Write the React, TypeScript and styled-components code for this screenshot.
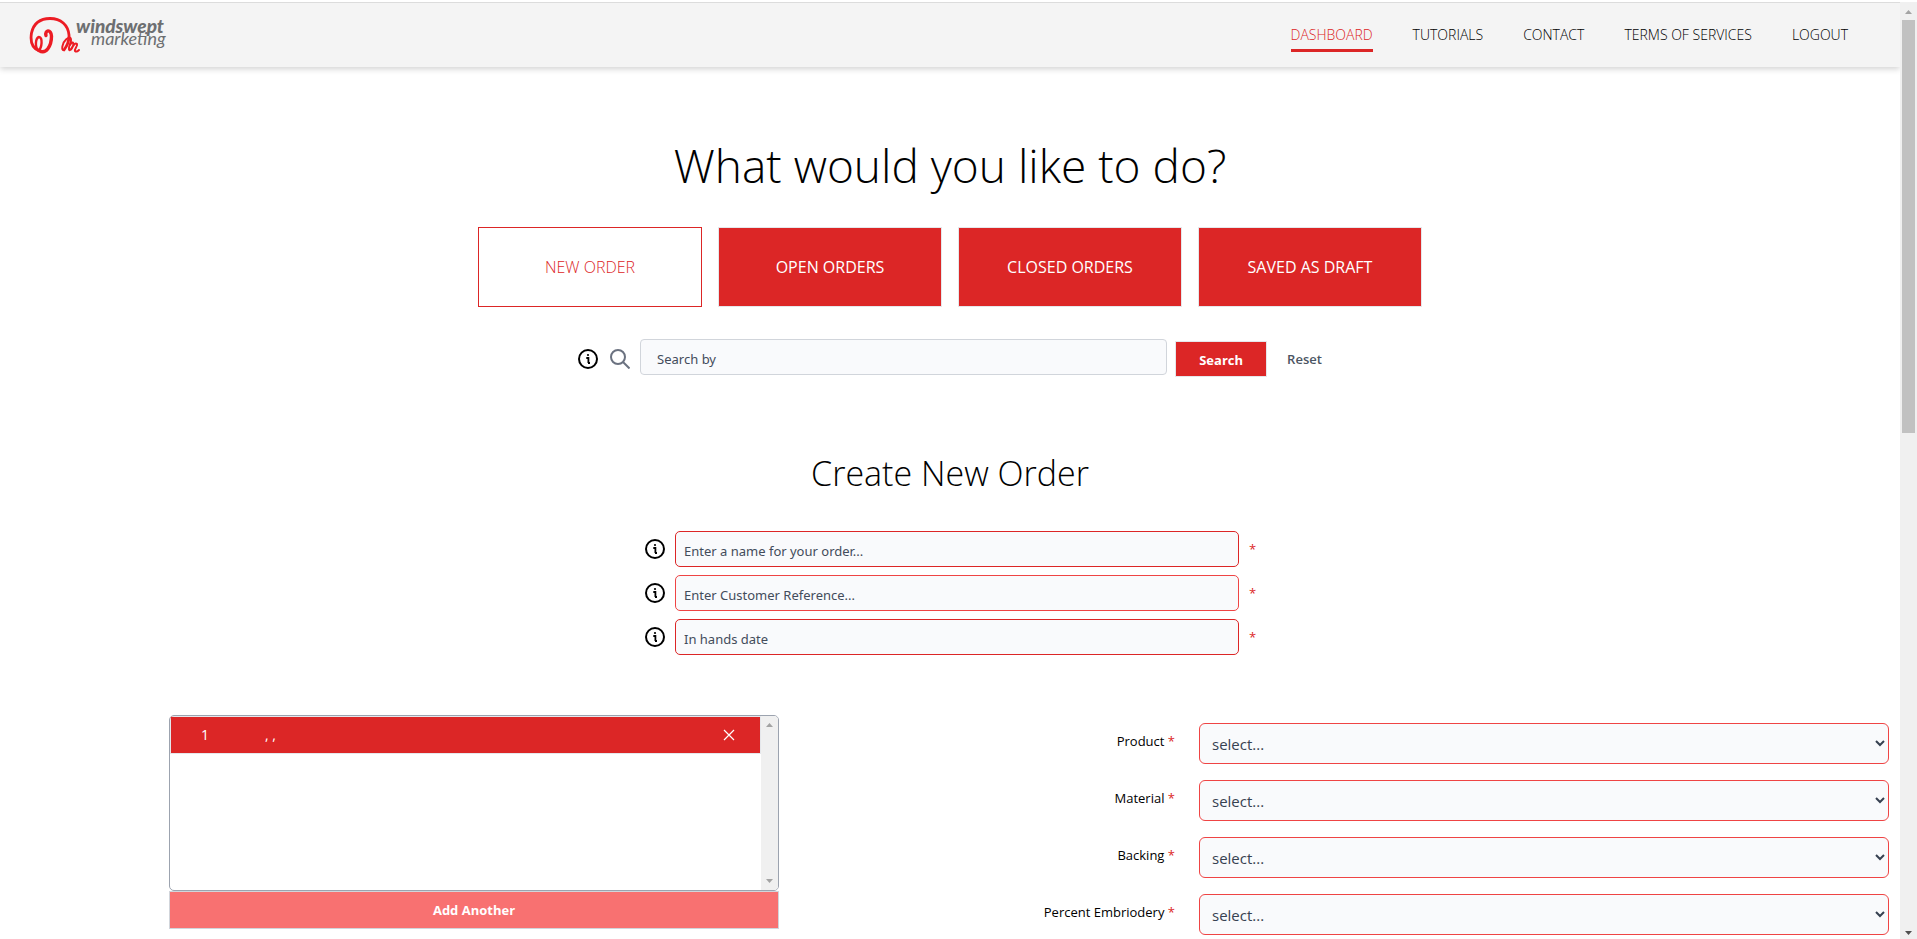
import React from "react";
import styled, { createGlobalStyle } from "styled-components";

const RED = "#dc2626";
const SANS = '"Open Sans", "Noto Sans", sans-serif';
const WIDE = '"Noto Sans", "Open Sans", sans-serif';

const GlobalStyle = createGlobalStyle`
  *, *::before, *::after { box-sizing: border-box; }
  body { margin: 0; background: #fff; color: #000; font: 400 14px/20px ${SANS}; }
  button, input, select { font-family: inherit; margin: 0; }
  h1, h2 { margin: 0; font-weight: 300; text-align: center; }
`;

const Window = styled.div`
  display: grid;
  grid-template-columns: minmax(0, 1fr) 17px;
  height: 100vh;
  padding-top: 2px;
  overflow: hidden;
`;

const Page = styled.div`
  min-width: 0;
  min-height: 0;
  overflow: hidden;
  border-top: 1px solid #dcdcdc;
`;

const Header = styled.header`
  display: flex;
  align-items: center;
  justify-content: space-between;
  height: 64px;
  padding: 0 52px 0 29px;
  background: #f4f4f4;
  box-shadow: 0 2px 6px rgba(0, 0, 0, 0.18);
`;

const Nav = styled.nav`
  display: flex;
  gap: 40px;
`;

const NavLink = styled.a<{ $active?: boolean }>`
  padding: 6px 0 4px;
  border-bottom: 3px solid ${(p) => (p.$active ? RED : "transparent")};
  color: ${(p) => (p.$active ? RED : "#000")};
  font-size: 14px;
  font-weight: 300;
  line-height: 20px;
  text-decoration: none;
`;

const Title = styled.h1`
  padding-top: 68px;
  font-size: 46px;
  line-height: 60px;
`;

const Tabs = styled.div`
  display: flex;
  justify-content: center;
  gap: 16px;
  padding-top: 32px;
`;

const Tab = styled.button<{ $active?: boolean }>`
  width: 224px;
  height: 80px;
  border: 1px solid ${(p) => (p.$active ? RED : "#e5e7eb")};
  background: ${(p) => (p.$active ? "#fff" : RED)};
  color: ${(p) => (p.$active ? RED : "#fff")};
  font-size: 16px;
  font-weight: ${(p) => (p.$active ? 300 : 400)};
  line-height: 24px;
`;

const SearchBar = styled.form`
  display: flex;
  justify-content: center;
  align-items: center;
  gap: 8px;
  padding-top: 30px;
`;

const Icons = styled.span`
  display: flex;
  gap: 12px;
  padding: 4px 2px 0 0;
`;

const TextInput = styled.input<{ $tone: string; $inset: number }>`
  height: 36px;
  padding: 4px ${(p) => p.$inset}px 0;
  border: 1px solid ${(p) => p.$tone};
  border-radius: 5px;
  background: #f9fafc;
  color: #374151;
  font-family: ${WIDE};
  font-size: 13px;
  &::placeholder { color: #434c5b; opacity: 1; }
`;

const SearchInput = styled(TextInput)`
  width: 527px;
  border-radius: 4px;
`;

const SearchButton = styled.button`
  width: 92px;
  height: 36px;
  margin-top: 4px;
  padding-top: 2px;
  border: 1px solid #e5e7eb;
  background: ${RED};
  color: #fff;
  font-size: 13px;
  font-weight: 700;
`;

const ResetButton = styled.button`
  padding: 4px 0 0 12px;
  border: 0;
  background: none;
  color: #4b5563;
  font-size: 13px;
  font-weight: 600;
`;

const Subtitle = styled.h2`
  padding-top: 74px;
  font-size: 34px;
  line-height: 44px;
`;

const Details = styled.form`
  display: flex;
  flex-direction: column;
  align-items: center;
  gap: 8px;
  padding-top: 36px;
`;

const DetailRow = styled.div`
  display: flex;
  align-items: center;
  gap: 10px;
`;

const DetailInput = styled(TextInput)`
  width: 564px;
`;

const Star = styled.span`
  color: ${RED};
`;

const RowStar = styled(Star)`
  width: 6px;
  font-size: 13px;
`;

const Order = styled.section`
  display: grid;
  grid-template-columns: 610fr 1094fr;
  align-items: start;
  gap: 16px;
  padding: 60px 11px 0 169px;
`;

const ItemList = styled.div`
  display: grid;
  grid-template-columns: minmax(0, 1fr) 17px;
  height: 176px;
  border: 1px solid #9ca3af;
  border-radius: 5px;
  overflow: hidden;
`;

const Item = styled.div`
  display: flex;
  align-items: center;
  height: 38px;
  padding: 0 25px 0 30px;
  border: 1px solid #e5e7eb;
  background: ${RED};
  color: #fff;
`;

const ItemNumber = styled.span`
  width: 64px;
`;

const ItemName = styled.span`
  flex: 1;
`;

const CloseButton = styled.button`
  display: flex;
  padding: 0;
  border: 0;
  background: none;
  color: inherit;
`;

const AddButton = styled.button`
  display: block;
  width: 100%;
  height: 38px;
  border: 1px solid #d1d5db;
  background: #f87171;
  color: #fff;
  font-size: 13px;
  font-weight: 700;
`;

const Fields = styled.div`
  display: flex;
  flex-direction: column;
  gap: 16px;
  padding-top: 8px;
`;

const Field = styled.div`
  display: grid;
  grid-template-columns: 380fr 690fr;
  gap: 24px;
`;

const FieldLabel = styled.label`
  padding-top: 8px;
  font-size: 13px;
  text-align: right;
`;

const Select = styled.select`
  width: 100%;
  height: 41px;
  padding: 0 0 0 8px;
  border: 1px solid #ef4444;
  border-radius: 6px;
  background: #f9fafc;
  color: #374151;
  font-size: 15px;
`;

const Track = styled.div<{ $page?: boolean }>`
  display: flex;
  flex-direction: column;
  justify-content: space-between;
  align-items: center;
  padding: ${(p) => (p.$page ? "8px 0 4px" : "7px 0")};
  background: #f0f0f0;
`;

const Thumb = styled.div`
  width: 13px;
  height: calc(45% - 3px);
  margin: 6px 0 auto;
  background: #c1c1c1;
`;

const Arrow = ({ down, dark }: { down?: boolean; dark?: boolean }) => (
  <svg width="7" height="4" viewBox="0 0 7 4" aria-hidden="true">
    <path d={down ? "M0 0h7L3.500 4z" : "M0 4h7L3.500 0z"} fill={dark ? "#505050" : "#a3a3a3"} />
  </svg>
);

const InfoIcon = () => (
  <svg width="20" height="20" viewBox="0 0 20 20" aria-hidden="true">
    <circle cx="10" cy="10" r="9" fill="none" stroke="#000" strokeWidth="2" />
    <circle cx="10" cy="6" r="1.100" />
    <path d="M8.300 9H10.400V14M10 14H12" fill="none" stroke="#000" strokeWidth="1.800" />
  </svg>
);

const SearchIcon = () => (
  <svg width="20" height="20" viewBox="0 0 20 20" fill="none" stroke="#6b7280" strokeWidth="2" aria-hidden="true">
    <circle cx="8" cy="8" r="7" />
    <path d="M13 13l6.500 6.500" />
  </svg>
);

const CloseIcon = () => (
  <svg width="12" height="12" viewBox="0 0 12 12" stroke="currentColor" strokeWidth="1.200" aria-hidden="true">
    <path d="M1 1l10 10M11 1L1 11" />
  </svg>
);

const Logo = () => (
  <svg width="146" height="48" viewBox="0 -4 146 48" role="img" aria-label="windswept marketing">
    <g fill="none" stroke="#ec1c24" strokeLinecap="round" strokeLinejoin="round">
      <path strokeWidth="2.800" d="M9.500 35.500C4 33 1 27 2.500 18C5 7 13 3.500 21 3.500C32 3.500 39 10 40 20C40.300 26 38 31 35 35" />
      <path strokeWidth="2.400" d="M9.500 35.500C5.500 32 6.500 23 10 22C14 22 13 33 9.500 35.500" />
      <path strokeWidth="3.400" d="M10 35.500C17 40 22.500 31 22.500 21C22 13.500 15.500 15 17 20.500" />
      <path strokeWidth="2" d="M35 35C32 36 33 28 37 24.500C42 20 43 24 41 29C39 34 40 37 42 34C44 31 46 27 48 29C49 31 45 34 46 36C47 37 49 36 50 35M41 30C43 26 45 27 44 31C43 34 41 36 40 34" />
    </g>
    <g fill="#6d6f71" fontFamily="Lato, sans-serif" fontStyle="italic">
      <text x="47" y="18" fontSize="19" fontWeight="900">windswept</text>
      <text x="62" y="30" fontSize="18">marketing</text>
    </g>
  </svg>
);

const links = ["DASHBOARD", "TUTORIALS", "CONTACT", "TERMS OF SERVICES", "LOGOUT"];
const tabs = ["NEW ORDER", "OPEN ORDERS", "CLOSED ORDERS", "SAVED AS DRAFT"];
const details = [
  { text: "Enter a name for your order...", tone: RED },
  { text: "Enter Customer Reference...", tone: "#ef4444" },
  { text: "In hands date", tone: RED },
];
const fields = ["Product", "Material", "Backing", "Percent Embriodery"];

export default function App() {
  return (
    <>
      <GlobalStyle />
      <Window>
        <Page>
          <Header>
            <Logo />
            <Nav>
              {links.map((link, i) => (
                <NavLink key={link} href="#" $active={i === 0}>{link}</NavLink>
              ))}
            </Nav>
          </Header>
          <main>
            <Title>What would you like to do?</Title>
            <Tabs>
              {tabs.map((tab, i) => (
                <Tab key={tab} type="button" $active={i === 0}>{tab}</Tab>
              ))}
            </Tabs>
            <SearchBar>
              <Icons><InfoIcon /><SearchIcon /></Icons>
              <SearchInput aria-label="Search by" placeholder="Search by" $tone="#d1d5db" $inset={16} />
              <SearchButton type="button">Search</SearchButton>
              <ResetButton type="reset">Reset</ResetButton>
            </SearchBar>
            <Subtitle>Create New Order</Subtitle>
            <Details>
              {details.map((d) => (
                <DetailRow key={d.text}>
                  <InfoIcon />
                  <DetailInput aria-label={d.text} placeholder={d.text} $tone={d.tone} $inset={8} />
                  <RowStar>*</RowStar>
                </DetailRow>
              ))}
            </Details>
            <Order>
              <div>
                <ItemList>
                  <Item>
                    <ItemNumber>1</ItemNumber>
                    <ItemName>, ,</ItemName>
                    <CloseButton type="button" aria-label="Remove item"><CloseIcon /></CloseButton>
                  </Item>
                  <Track><Arrow /><Arrow down /></Track>
                </ItemList>
                <AddButton type="button">Add Another</AddButton>
              </div>
              <Fields>
                {fields.map((name) => (
                  <Field key={name}>
                    <FieldLabel htmlFor={name}>{name} <Star>*</Star></FieldLabel>
                    <Select id={name}><option>select...</option></Select>
                  </Field>
                ))}
              </Fields>
            </Order>
          </main>
        </Page>
        <Track $page>
          <Arrow />
          <Thumb />
          <Arrow down dark />
        </Track>
      </Window>
    </>
  );
}
